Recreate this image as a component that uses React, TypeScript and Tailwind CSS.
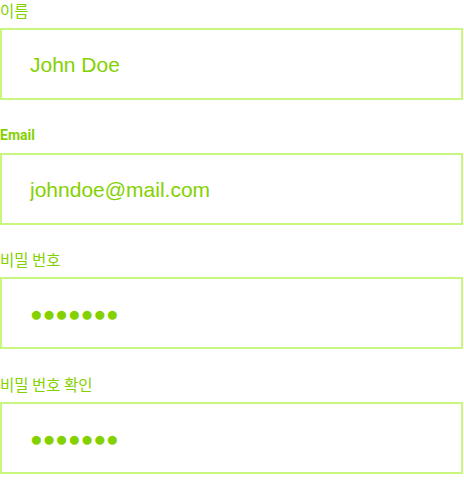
import React from "react";

const labelKr =
  "block text-[15.5px] leading-[20px] text-[#84d100] mb-2 font-normal font-['Noto_Sans_CJK_KR',sans-serif]";
const labelEn =
  "block text-[14px] leading-[20px] text-[#84d100] mb-2 font-bold font-['Roboto',sans-serif]";
const inputCls =
  "block w-[463px] h-[72px] border-2 border-[#c8f67f] bg-white pl-[28px] pr-[28px] pt-[2px] text-[21px] text-[#84d100] outline-none font-['Liberation_Sans',Arial,sans-serif]";
const dotCls = inputCls + " text-[#8fd800]";

export default function App() {
  return (
    <div className="w-[464px] h-[491px] bg-white flex flex-col">
      <div>
        <label className={labelKr}>이름</label>
        <input readOnly className={inputCls} value="John Doe" />
      </div>
      <div className="mt-[25px]">
        <label className={labelEn}>Email</label>
        <input readOnly className={inputCls} value="johndoe@mail.com" />
      </div>
      <div className="mt-[24px]">
        <label className={labelKr}>비밀 번호</label>
        <input readOnly className={dotCls} value="●●●●●●●" />
      </div>
      <div className="mt-[25px]">
        <label className={labelKr}>비밀 번호 확인</label>
        <input readOnly className={dotCls} value="●●●●●●●" />
      </div>
    </div>
  );
}
